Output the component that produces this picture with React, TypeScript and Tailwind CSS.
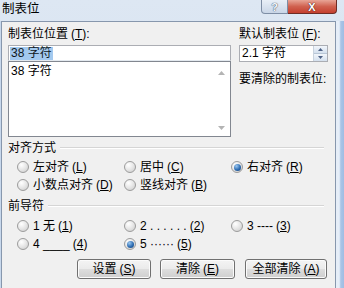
import React from "react";

const Acc = ({ t, k }: { t: string; k: string }) => (
  <span className="whitespace-pre">
    {t}
    <span className="ml-[3px]">
      (<span className="underline underline-offset-[1px]">{k}</span>)
    </span>
  </span>
);

const Radio = ({ checked, children }: { checked?: boolean; children: React.ReactNode }) => (
  <div className="flex items-center h-[18px]">
    <span className="w-[12px] h-[12px] rounded-full border border-[#9c9c9c] bg-[radial-gradient(circle_at_35%_30%,#ffffff_0%,#e6e6e6_50%,#c9c9c9_100%)] flex items-center justify-center shrink-0">
      {checked && (
        <span className="w-[7px] h-[7px] rounded-full bg-[radial-gradient(circle_at_35%_30%,#9cc8f0_0%,#2e6db3_55%,#143c6e_100%)]" />
      )}
    </span>
    <span className="ml-[4px] leading-[14px] whitespace-pre">{children}</span>
  </div>
);

const GroupHead = ({ label }: { label: string }) => (
  <div className="flex items-center h-[14px] leading-[14px]">
    <span>{label}</span>
    <div className="flex-1 ml-[4px] mr-[5px] border-t border-t-[#d5d5d5] border-b border-b-white" />
  </div>
);

const Btn = ({ w, children }: { w: string; children: React.ReactNode }) => (
  <div
    className={`${w} h-[20px] rounded-[3px] border border-[#707070] bg-[linear-gradient(to_bottom,#f4f4f4_0%,#ebebeb_48%,#dddddd_52%,#cfcfcf_100%)] flex items-center justify-center leading-[14px] shadow-[inset_0_0_0_1px_#fbfbfb]`}
  >
    {children}
  </div>
);

const Tri = ({ up }: { up?: boolean }) => (
  <svg width="7" height="4" viewBox="0 0 7 4">
    {up ? <path d="M0 4 L3.5 0 L7 4 Z" fill="#b4b4b4" /> : <path d="M0 0 L3.5 4 L7 0 Z" fill="#b4b4b4" />}
  </svg>
);

export default function App() {
  return (
    <div className="w-[344px] h-[288px] overflow-hidden flex flex-col bg-[linear-gradient(to_bottom,#dde7f3,#cfdcec)] text-[12px] text-black font-['Liberation_Sans','Noto_Sans_CJK_SC',sans-serif]">
      {/* title bar */}
      <div className="h-[21px] shrink-0 flex items-start">
        <div className="pl-[2px] pt-[1px] text-[12.5px] leading-[16px]">制表位</div>
        <div className="flex-1" />
        <div className="w-[27px] h-[14px] border border-t-0 border-[#7e8ea5] rounded-bl-[4px] bg-[linear-gradient(to_bottom,#e9eff7,#c9d6e7)] flex items-center justify-center">
          <span className="text-[11px] font-bold leading-[12px] text-[#f4f7fb] [text-shadow:0_0_1px_#44546a,0_0_1px_#44546a]">?</span>
        </div>
        <div className="w-[49px] h-[14px] border border-t-0 border-l-0 border-[#6d2c25] rounded-br-[4px] bg-[linear-gradient(to_bottom,#e8a596,#d0614f_50%,#c43f2f)] flex items-center justify-center">
          <span className="text-[11px] font-bold leading-[12px] text-white [text-shadow:0_0_1px_#4a1a14,0_0_1px_#4a1a14]">X</span>
        </div>
        <div className="w-[7px]" />
      </div>

      <div className="flex-1 flex">
        <div className="w-[1px] bg-[#c8d8ec]" />
        {/* client */}
        <div className="w-[335px] bg-[#f0f0f0] border-l border-t border-r border-[#8797ad] pl-[6px] pr-[6px] pt-[5px] flex flex-col">
          {/* top row */}
          <div className="flex">
            <div className="w-[223px] flex flex-col">
              <div className="h-[14px] leading-[14px]">
                <Acc t="制表位位置" k="T" />:
              </div>
              <div className="mt-[4px] h-[16px] border border-[#abadb3] border-b-[#e3e9ef] bg-white pl-[1px] flex items-center">
                <span className="bg-[#a3c9ef] leading-[13px] px-[1px] text-[#101820]">38 字符</span>
              </div>
              <div className="h-[76px] border border-[#828790] bg-white flex">
                <div className="flex-1 pl-[2px] pt-[2px] leading-[14px]">38 字符</div>
                <div className="w-[17px] flex flex-col justify-between pb-[6px] pt-[9px] items-center">
                  <Tri up />
                  <Tri />
                </div>
              </div>
            </div>
            <div className="w-[89px] ml-[8px] flex flex-col">
              <div className="h-[14px] leading-[14px] whitespace-nowrap">
                <Acc t="默认制表位" k="F" />:
              </div>
              <div className="mt-[4px] h-[17px] border border-[#abadb3] bg-white flex">
                <div className="flex-1 pl-[2px] leading-[15px]">2.1 字符</div>
                <div className="w-[14px] flex flex-col border-l border-[#c9d3de]">
                  <div className="flex-1 bg-[linear-gradient(to_bottom,#f2f6fb,#d4e0ee)] flex items-center justify-center border-b border-[#b8c6d6]">
                    <svg width="5" height="3" viewBox="0 0 5 3"><path d="M0 3 L2.5 0 L5 3Z" fill="#4d6185" /></svg>
                  </div>
                  <div className="flex-1 bg-[linear-gradient(to_bottom,#f2f6fb,#d4e0ee)] flex items-center justify-center">
                    <svg width="5" height="3" viewBox="0 0 5 3"><path d="M0 0 L2.5 3 L5 0Z" fill="#4d6185" /></svg>
                  </div>
                </div>
              </div>
              <div className="mt-[10px] h-[14px] leading-[14px] whitespace-nowrap">要清除的制表位:</div>
            </div>
          </div>

          {/* alignment */}
          <div className="mt-[4px]">
            <GroupHead label="对齐方式" />
          </div>
          <div className="mt-[3px] pl-[9px] grid grid-cols-[107px_107px_1fr]">
            <Radio><Acc t="左对齐" k="L" /></Radio>
            <Radio><Acc t="居中" k="C" /></Radio>
            <Radio checked><Acc t="右对齐" k="R" /></Radio>
            <Radio><Acc t="小数点对齐" k="D" /></Radio>
            <Radio><Acc t="竖线对齐" k="B" /></Radio>
            <div />
          </div>

          {/* leader */}
          <div className="mt-[5px]">
            <GroupHead label="前导符" />
          </div>
          <div className="mt-[4px] pl-[9px] grid grid-cols-[107px_107px_1fr]">
            <Radio><Acc t="1 无" k="1" /></Radio>
            <Radio><Acc t="2 . . . . . ." k="2" /></Radio>
            <Radio><Acc t="3 ----" k="3" /></Radio>
            <Radio><Acc t="4 ____" k="4" /></Radio>
            <Radio checked><Acc t="5 ······" k="5" /></Radio>
            <div />
          </div>

          {/* buttons */}
          <div className="mt-[6px] flex pl-[69px]">
            <Btn w="w-[74px]"><Acc t="设置" k="S" /></Btn>
            <div className="w-[9px]" />
            <Btn w="w-[75px]"><Acc t="清除" k="E" /></Btn>
            <div className="w-[10px]" />
            <Btn w="w-[82px]"><Acc t="全部清除" k="A" /></Btn>
          </div>
        </div>
        <div className="w-[8px] bg-[linear-gradient(to_right,#e6eef8_0%,#e6eef8_40%,#a9c4e6_60%,#9fbde3_100%)]" />
      </div>
    </div>
  );
}
